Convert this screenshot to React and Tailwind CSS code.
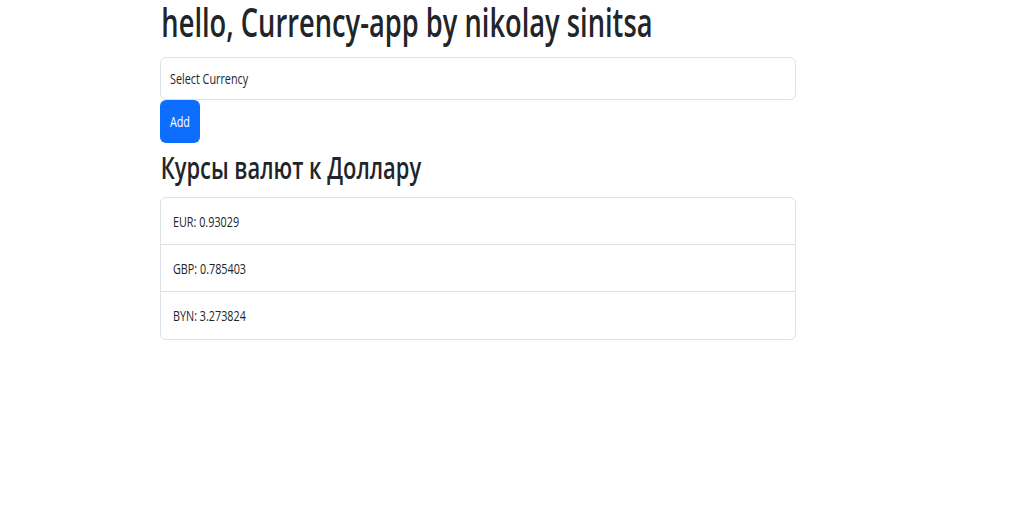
import React from "react";

const rates = [
  { code: "EUR", value: "0.93029" },
  { code: "GBP", value: "0.785403" },
  { code: "BYN", value: "3.273824" },
];

export default function App() {
  return (
    <div
      className="min-h-screen bg-white text-[#212529] pl-[160px]"
      style={{ fontFamily: '"Open Sans", "Noto Sans", sans-serif' }}
    >
      <h1 className="text-[40px] leading-[44px] font-semibold whitespace-nowrap">
        <span className="inline-block origin-left scale-x-[0.682] pl-[2px]">
          hello, Currency-app by nikolay sinitsa
        </span>
      </h1>

      <div className="w-[636px]">
        {/* select */}
        <div className="mt-[13px] h-[43px] flex items-center border border-[#dee2e6] rounded-md px-[9px] text-[15px]">
          <span className="inline-block origin-left scale-x-[0.72] whitespace-nowrap">
            Select Currency
          </span>
        </div>

        <button className="h-[43px] w-[40px] flex items-center justify-center bg-[#0d6efd] text-white rounded-md text-[15px]">
          <span className="inline-block scale-x-[0.72]">Add</span>
        </button>

        <h2 className="mt-[5px] text-[31px] leading-[38px] font-semibold whitespace-nowrap">
          <span className="inline-block origin-left scale-x-[0.706] pl-[1px]">
            Курсы валют к Доллару
          </span>
        </h2>

        {/* rates list */}
        <div className="mt-[11px] border border-[#dee2e6] rounded-md divide-y divide-[#dee2e6]">
          {rates.map((r) => (
            <div key={r.code} className="h-[47px] flex items-center px-[12px] text-[15px]">
              <span className="inline-block origin-left scale-x-[0.72] whitespace-nowrap">
                {r.code}: {r.value}
              </span>
            </div>
          ))}
        </div>
      </div>
    </div>
  );
}
